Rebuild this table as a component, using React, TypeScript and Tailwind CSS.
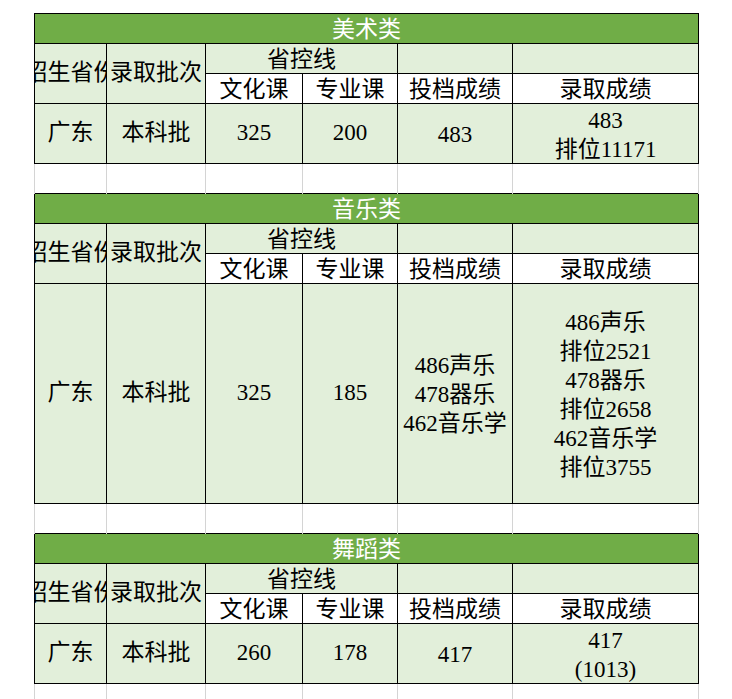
import React from 'react';

const sections = [
  {
    title: '美术类',
    h: 'h-[60px]',
    wenhua: '325',
    zhuanye: '200',
    toudang: ['483'],
    luqu: ['483', '排位11171'],
  },
  {
    title: '音乐类',
    h: 'h-[220px]',
    wenhua: '325',
    zhuanye: '185',
    toudang: ['486声乐', '478器乐', '462音乐学'],
    luqu: ['486声乐', '排位2521', '478器乐', '排位2658', '462音乐学', '排位3755'],
  },
  {
    title: '舞蹈类',
    h: 'h-[60px]',
    wenhua: '260',
    zhuanye: '178',
    toudang: ['417'],
    luqu: ['417', '(1013)'],
  },
];

const cell =
  "border border-black p-0 text-center align-middle font-['Liberation_Serif','Noto_Sans_CJK_SC',serif] text-[23px] text-black";
const green = 'bg-[#e2efda]';

function Clip({ w, children }: { w: string; children: React.ReactNode }) {
  return (
    <div className={`${w} flex justify-center overflow-hidden whitespace-nowrap`}>{children}</div>
  );
}

function Lines({ items }: { items: string[] }) {
  return (
    <div className="flex translate-y-[1px] flex-col items-center">
      {items.map((t, i) => (
        <span key={i} className="leading-[29px]">{t}</span>
      ))}
    </div>
  );
}

function EmptyRow() {
  return (
    <tr className="h-[30px]">
      {[0, 1, 2, 3, 4, 5].map(i => (
        <td key={i} className="border-x border-[#d4d4d4] p-0" />
      ))}
    </tr>
  );
}

export default function App() {
  return (
    <div className="h-[699px] w-[732px] overflow-hidden bg-white pl-[34px] pt-[13px]">
      <table className="w-[665px] table-fixed border-collapse">
        <colgroup>
          <col className="w-[72px]" />
          <col className="w-[99px]" />
          <col className="w-[97px]" />
          <col className="w-[95px]" />
          <col className="w-[115px]" />
          <col className="w-[186px]" />
        </colgroup>
        <tbody>
          {sections.map(s => (
            <React.Fragment key={s.title}>
              {/* title */}
              <tr className="h-[30px]">
                <td colSpan={6} className={`${cell} bg-[#70ad47] pt-[2px] leading-[26px] text-white`}>
                  {s.title}
                </td>
              </tr>
              {/* header */}
              <tr className="h-[30px]">
                <td rowSpan={2} className={`${cell} ${green}`}>
                  <Clip w="w-[71px]">招生省份</Clip>
                </td>
                <td rowSpan={2} className={`${cell} ${green}`}>
                  <Clip w="w-[98px]">录取批次</Clip>
                </td>
                <td colSpan={2} className={`${cell} ${green} pt-[2px] leading-[26px]`}>省控线</td>
                <td className={`${cell} ${green}`} />
                <td className={`${cell} ${green}`} />
              </tr>
              <tr className="h-[30px]">
                <td className={`${cell} bg-white pt-[2px] leading-[26px]`}>文化课</td>
                <td className={`${cell} bg-white pt-[2px] leading-[26px]`}>专业课</td>
                <td className={`${cell} bg-white pt-[2px] leading-[26px]`}>投档成绩</td>
                <td className={`${cell} bg-white pt-[2px] leading-[26px]`}>录取成绩</td>
              </tr>
              {/* data */}
              <tr className={s.h}>
                <td className={`${cell} ${green}`}>广东</td>
                <td className={`${cell} ${green}`}>本科批</td>
                <td className={`${cell} ${green}`}>{s.wenhua}</td>
                <td className={`${cell} ${green}`}>{s.zhuanye}</td>
                <td className={`${cell} ${green}`}>
                  <Lines items={s.toudang} />
                </td>
                <td className={`${cell} ${green}`}>
                  <Lines items={s.luqu.length > 2 ? s.luqu : s.luqu} />
                </td>
              </tr>
              <EmptyRow />
            </React.Fragment>
          ))}
        </tbody>
      </table>
    </div>
  );
}
